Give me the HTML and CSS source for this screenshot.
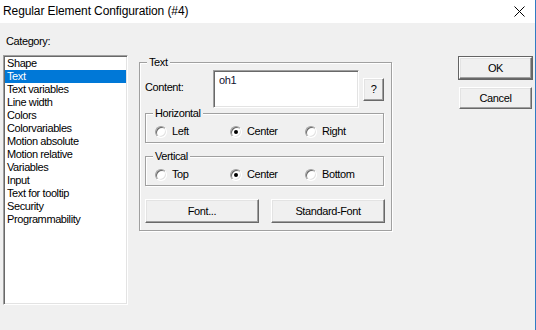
FILE: index.html
```html
<!DOCTYPE html>
<html>
<head>
<meta charset="utf-8">
<link rel="stylesheet" href="styles.css">
</head>
<body>
<div class="window">
  <div class="titlebar">
    <span class="title">Regular Element Configuration (#4)</span>
    <svg class="close" width="11" height="11" viewBox="0 0 11 11"><path d="M0.5 0.5 L10.5 10.5 M10.5 0.5 L0.5 10.5" stroke="#000" stroke-width="1" fill="none"/></svg>
  </div>
  <div class="content">
    <div class="leftcol">
      <div class="catlabel">Category:</div>
      <div class="listbox">
        <div class="item">Shape</div>
        <div class="item selected">Text</div>
        <div class="item">Text variables</div>
        <div class="item">Line width</div>
        <div class="item">Colors</div>
        <div class="item">Colorvariables</div>
        <div class="item">Motion absolute</div>
        <div class="item">Motion relative</div>
        <div class="item">Variables</div>
        <div class="item">Input</div>
        <div class="item">Text for tooltip</div>
        <div class="item">Security</div>
        <div class="item">Programmability</div>
      </div>
    </div>
    <div class="group main">
      <span class="legend">Text</span>
      <div class="contentrow">
        <span class="clabel">Content:</span>
        <div class="textbox">oh1</div>
        <div class="btn qbtn">?</div>
      </div>
      <div class="group sub">
        <span class="legend">Horizontal</span>
        <div class="radiorow">
          <div class="opt"><span class="radio"></span>Left</div>
          <div class="opt"><span class="radio checked"></span>Center</div>
          <div class="opt"><span class="radio"></span>Right</div>
        </div>
      </div>
      <div class="group sub vert">
        <span class="legend">Vertical</span>
        <div class="radiorow">
          <div class="opt"><span class="radio"></span>Top</div>
          <div class="opt"><span class="radio checked"></span>Center</div>
          <div class="opt"><span class="radio"></span>Bottom</div>
        </div>
      </div>
      <div class="fontrow">
        <div class="btn fbtn">Font...</div>
        <div class="btn fbtn">Standard-Font</div>
      </div>
    </div>
    <div class="rightcol">
      <div class="btn dbtn default">OK</div>
      <div class="btn dbtn cancel">Cancel</div>
    </div>
  </div>
</div>
</body>
</html>
```
FILE: styles.css
```css
* { box-sizing: border-box; }
html, body { margin: 0; padding: 0; }
body {
  width: 536px;
  height: 330px;
  overflow: hidden;
  background: #f0f0f0;
  font-family: "Liberation Sans", Arial, sans-serif;
  font-size: 11px;
  letter-spacing: -0.4px;
  color: #000;
}
.window {
  width: 536px;
  height: 330px;
  border-right: 1px solid #2f7dc4;
  background: #f0f0f0;
}
.titlebar {
  height: 23px;
  background: #fff;
  display: flex;
  align-items: center;
  justify-content: space-between;
  padding: 0 10px 0 3px;
}
.title {
  font-size: 12px;
  letter-spacing: -0.1px;
  color: #000;
  line-height: 16px;
  padding-bottom: 1px;
}
.close { display: block; margin-bottom: 1px; }
.content {
  display: flex;
  align-items: flex-start;
  padding: 12px 0 0 3px;
  line-height: 13px;
}
.leftcol { width: 125px; }
.catlabel { padding-left: 3px; height: 13px; margin-bottom: 7px; }
.listbox {
  height: 250px;
  background: #fff;
  border: 1px solid;
  border-color: #a0a0a0 #fff #fff #a0a0a0;
  box-shadow: inset 1px 1px 0 #696969, inset -1px -1px 0 #e3e3e3;
  padding: 1px;
}
.item { height: 13px; padding-left: 2px; white-space: nowrap; }
.item.selected { background: #0078d7; color: #fff; }

.group {
  position: relative;
  border: 1px solid #a0a0a0;
  box-shadow: 1px 1px 0 #fff, inset 1px 1px 0 #fff;
}
.legend {
  position: absolute;
  top: -7px;
  left: 7px;
  padding: 0 2px;
  background: #f0f0f0;
  line-height: 13px;
}
.main {
  width: 253px;
  margin-left: 11px;
  margin-top: 27px;
  padding: 7px 6px 7px 5px;
}
.contentrow { display: flex; align-items: flex-start; height: 37px; }
.clabel { width: 68px; margin-top: 11px; }
.textbox {
  width: 146px;
  height: 38px;
  background: #fff;
  border: 1px solid;
  border-color: #a0a0a0 #fff #fff #a0a0a0;
  box-shadow: inset 1px 1px 0 #696969, inset -1px -1px 0 #e3e3e3;
  padding: 3px 5px;
  color: #101030;
}
.btn {
  display: flex;
  align-items: center;
  justify-content: center;
  background: #f0f0f0;
  border: 1px solid;
  border-color: #fff #696969 #696969 #fff;
  box-shadow: inset -1px -1px 0 #a0a0a0, inset 1px 1px 0 #e3e3e3;
}
.qbtn { width: 21px; height: 23px; margin-left: 4px; margin-top: 8px; }
.sub {
  width: 239px;
  height: 30px;
  margin-top: 6px;
  padding: 11px 0 0 9px;
}
.vert { margin-top: 13px; }
.radiorow { display: flex; height: 13px; }
.opt { width: 75px; display: flex; align-items: center; }
.radio {
  position: relative;
  width: 12px;
  height: 12px;
  border-radius: 50%;
  background: #fff;
  border: 1px solid;
  border-color: #a0a0a0 #fff #fff #a0a0a0;
  box-shadow: inset 1px 1px 0 #696969, inset -1px -1px 0 #e3e3e3;
  margin-right: 5px;
  flex: none;
}
.radio.checked::after {
  content: "";
  position: absolute;
  left: 3px;
  top: 3px;
  width: 4px;
  height: 4px;
  border-radius: 50%;
  background: #000;
}
.fontrow {
  display: flex;
  gap: 12px;
  margin-top: 13px;
}
.fbtn { width: 114px; height: 24px; }
.rightcol {
  margin-left: 67px;
  margin-top: 22px;
  width: 73px;
}
.dbtn { width: 73px; height: 22px; }
.default { outline: 1px solid #646464; }
.cancel { margin-top: 8px; }
```
